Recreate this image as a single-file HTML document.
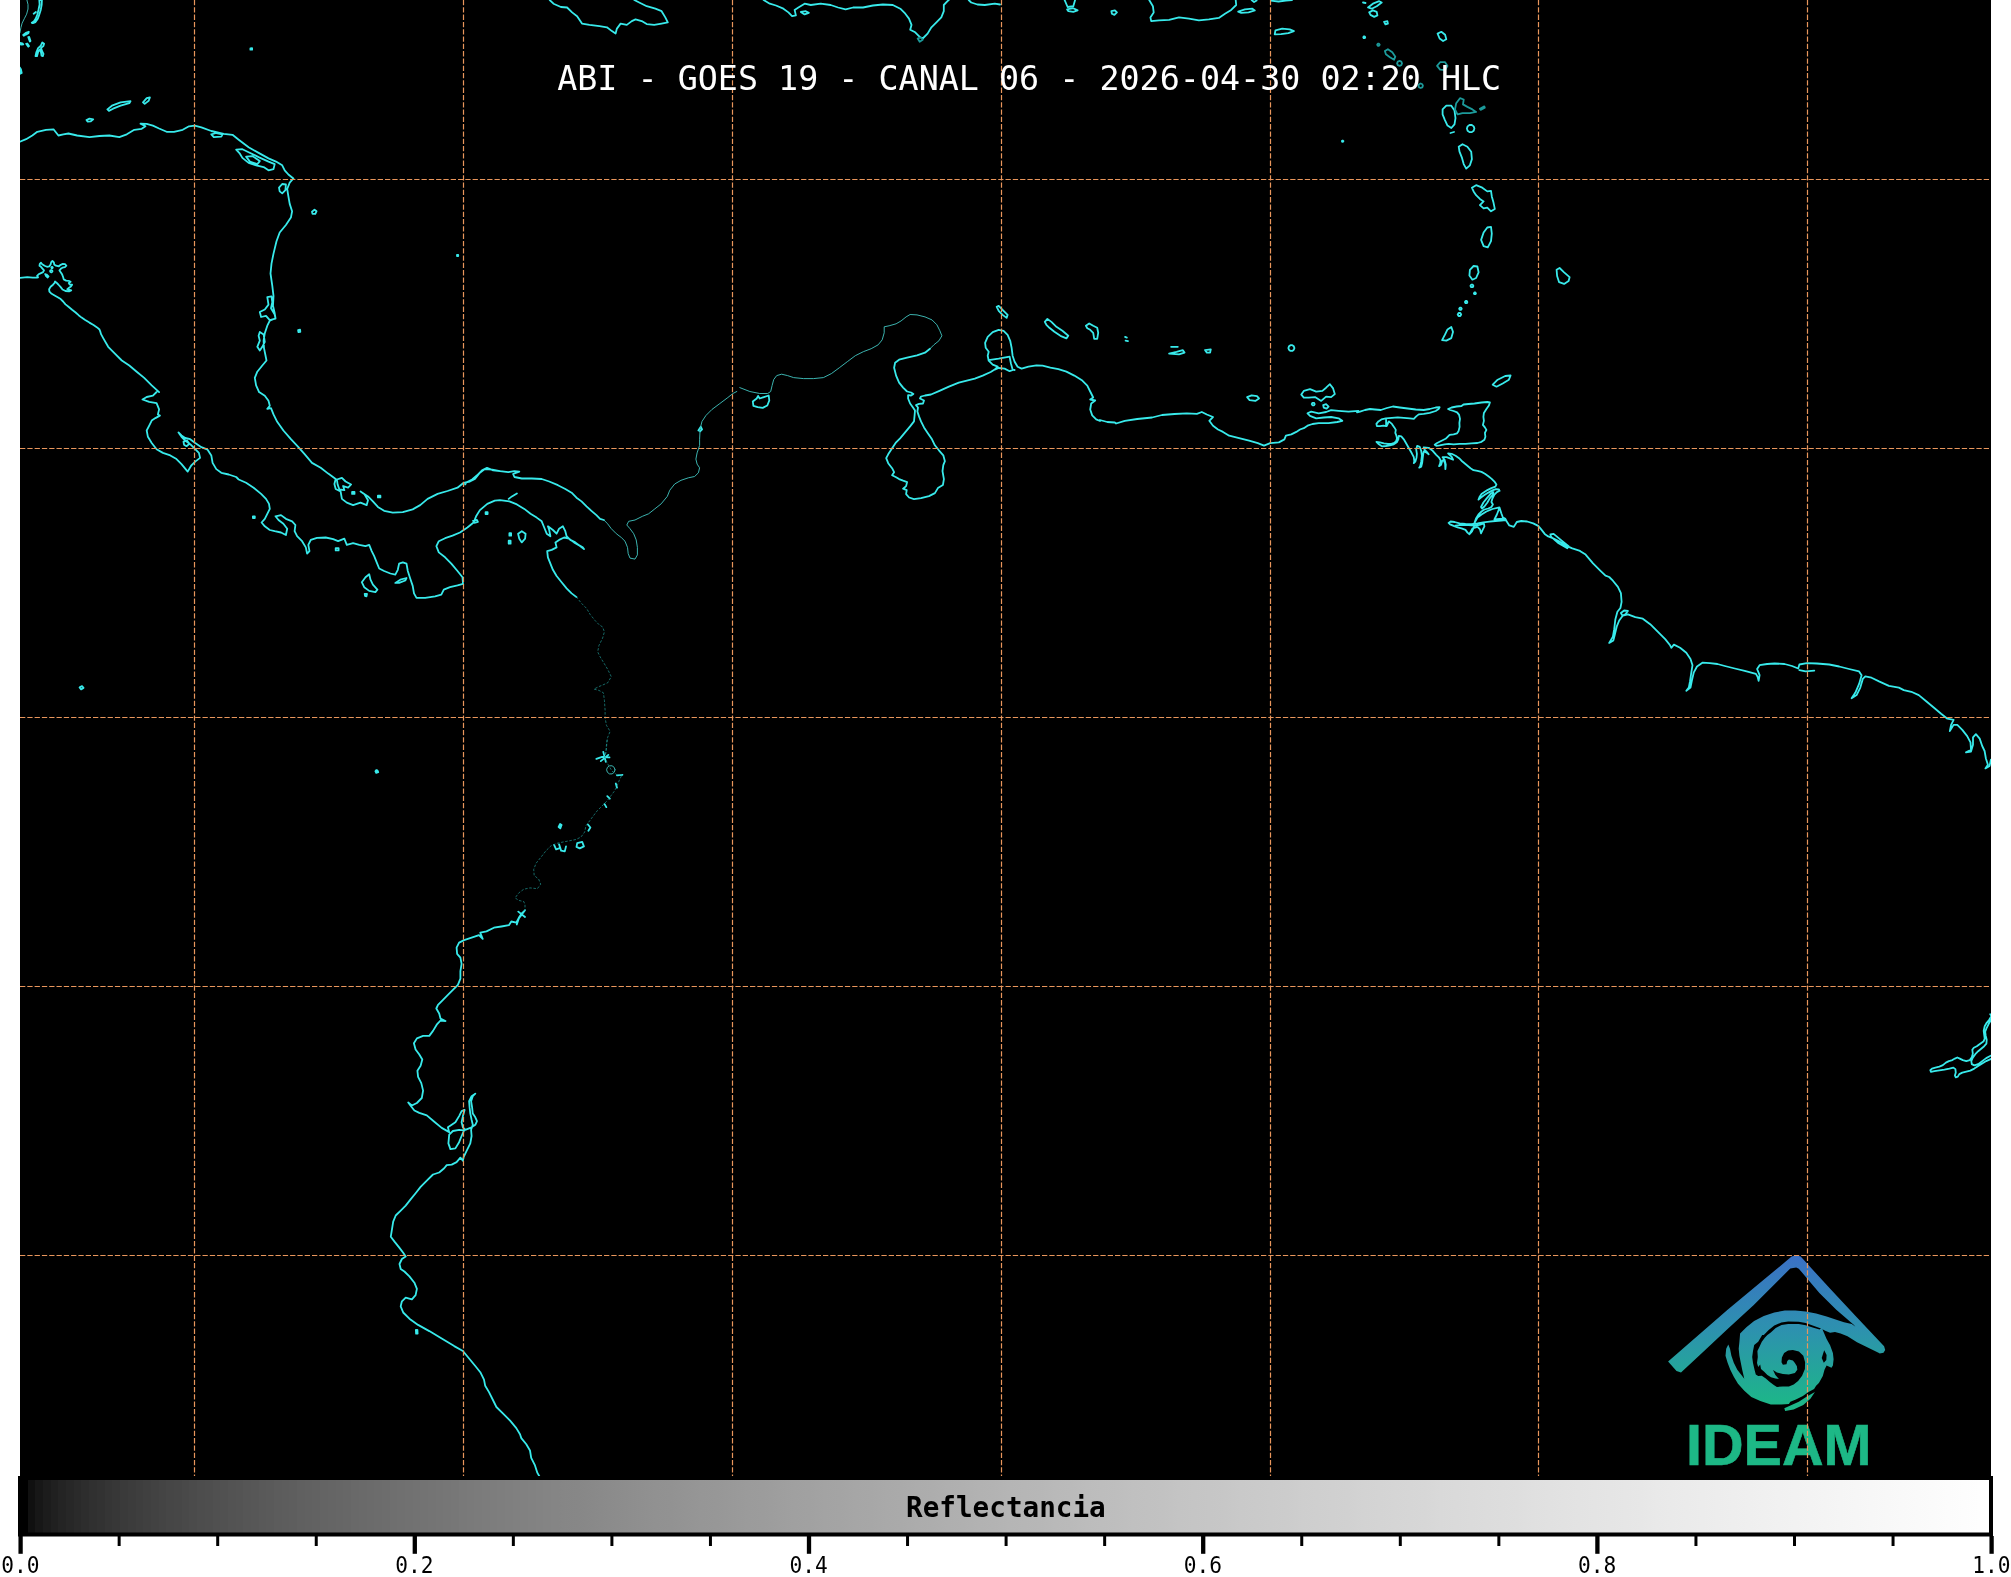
<!DOCTYPE html>
<html lang="es"><head><meta charset="utf-8"><title>ABI - GOES 19 - CANAL 06</title>
<style>
html,body{margin:0;padding:0;background:#fff;}
body{width:2011px;height:1577px;overflow:hidden;position:relative;}
svg{position:absolute;left:0;top:0;display:block;}
.t{font-family:"DejaVu Sans Mono","Liberation Mono",monospace;}
text{will-change:transform;filter:grayscale(0);}
.l{font-family:"Liberation Sans",Arial,sans-serif;font-weight:700;}
</style></head><body>
<svg width="2011" height="1577" viewBox="0 0 2011 1577">
<defs>
<linearGradient id="cb" x1="0" y1="0" x2="1" y2="0">
<stop offset="0.0000" stop-color="#000000"/><stop offset="0.0039" stop-color="#000000"/>
<stop offset="0.0039" stop-color="#101010"/><stop offset="0.0078" stop-color="#101010"/>
<stop offset="0.0078" stop-color="#171717"/><stop offset="0.0117" stop-color="#171717"/>
<stop offset="0.0117" stop-color="#1c1c1c"/><stop offset="0.0156" stop-color="#1c1c1c"/>
<stop offset="0.0156" stop-color="#202020"/><stop offset="0.0195" stop-color="#202020"/>
<stop offset="0.0195" stop-color="#242424"/><stop offset="0.0234" stop-color="#242424"/>
<stop offset="0.0234" stop-color="#272727"/><stop offset="0.0273" stop-color="#272727"/>
<stop offset="0.0273" stop-color="#2a2a2a"/><stop offset="0.0312" stop-color="#2a2a2a"/>
<stop offset="0.0312" stop-color="#2d2d2d"/><stop offset="0.0352" stop-color="#2d2d2d"/>
<stop offset="0.0352" stop-color="#303030"/><stop offset="0.0391" stop-color="#303030"/>
<stop offset="0.0391" stop-color="#323232"/><stop offset="0.0430" stop-color="#323232"/>
<stop offset="0.0430" stop-color="#353535"/><stop offset="0.0469" stop-color="#353535"/>
<stop offset="0.0469" stop-color="#373737"/><stop offset="0.0508" stop-color="#373737"/>
<stop offset="0.0508" stop-color="#3a3a3a"/><stop offset="0.0547" stop-color="#3a3a3a"/>
<stop offset="0.0547" stop-color="#3c3c3c"/><stop offset="0.0586" stop-color="#3c3c3c"/>
<stop offset="0.0586" stop-color="#3e3e3e"/><stop offset="0.0625" stop-color="#3e3e3e"/>
<stop offset="0.0625" stop-color="#404040"/><stop offset="0.0664" stop-color="#404040"/>
<stop offset="0.0664" stop-color="#424242"/><stop offset="0.0703" stop-color="#424242"/>
<stop offset="0.0703" stop-color="#444444"/><stop offset="0.0742" stop-color="#444444"/>
<stop offset="0.0742" stop-color="#464646"/><stop offset="0.0781" stop-color="#464646"/>
<stop offset="0.0781" stop-color="#474747"/><stop offset="0.0820" stop-color="#474747"/>
<stop offset="0.0820" stop-color="#494949"/><stop offset="0.0859" stop-color="#494949"/>
<stop offset="0.0859" stop-color="#4b4b4b"/><stop offset="0.0898" stop-color="#4b4b4b"/>
<stop offset="0.0898" stop-color="#4d4d4d"/><stop offset="0.0938" stop-color="#4d4d4d"/>
<stop offset="0.0938" stop-color="#4e4e4e"/><stop offset="0.0977" stop-color="#4e4e4e"/>
<stop offset="0.0977" stop-color="#505050"/><stop offset="0.1016" stop-color="#505050"/>
<stop offset="0.1016" stop-color="#515151"/><stop offset="0.1055" stop-color="#515151"/>
<stop offset="0.1055" stop-color="#535353"/><stop offset="0.1094" stop-color="#535353"/>
<stop offset="0.1094" stop-color="#545454"/><stop offset="0.1133" stop-color="#545454"/>
<stop offset="0.1133" stop-color="#565656"/><stop offset="0.1172" stop-color="#565656"/>
<stop offset="0.1172" stop-color="#575757"/><stop offset="0.1211" stop-color="#575757"/>
<stop offset="0.1211" stop-color="#595959"/><stop offset="0.1250" stop-color="#595959"/>
<stop offset="0.1250" stop-color="#5a5a5a"/><stop offset="0.1289" stop-color="#5a5a5a"/>
<stop offset="0.1289" stop-color="#5c5c5c"/><stop offset="0.1328" stop-color="#5c5c5c"/>
<stop offset="0.1328" stop-color="#5d5d5d"/><stop offset="0.1367" stop-color="#5d5d5d"/>
<stop offset="0.1367" stop-color="#5e5e5e"/><stop offset="0.1406" stop-color="#5e5e5e"/>
<stop offset="0.1406" stop-color="#606060"/><stop offset="0.1445" stop-color="#606060"/>
<stop offset="0.1445" stop-color="#616161"/><stop offset="0.1484" stop-color="#616161"/>
<stop offset="0.1484" stop-color="#626262"/><stop offset="0.1523" stop-color="#626262"/>
<stop offset="0.1523" stop-color="#646464"/><stop offset="0.1562" stop-color="#646464"/>
<stop offset="0.1562" stop-color="#656565"/><stop offset="0.1602" stop-color="#656565"/>
<stop offset="0.1602" stop-color="#666666"/><stop offset="0.1641" stop-color="#666666"/>
<stop offset="0.1641" stop-color="#676767"/><stop offset="0.1680" stop-color="#676767"/>
<stop offset="0.1680" stop-color="#696969"/><stop offset="0.1719" stop-color="#696969"/>
<stop offset="0.1719" stop-color="#6a6a6a"/><stop offset="0.1758" stop-color="#6a6a6a"/>
<stop offset="0.1758" stop-color="#6b6b6b"/><stop offset="0.1797" stop-color="#6b6b6b"/>
<stop offset="0.1797" stop-color="#6c6c6c"/><stop offset="0.1836" stop-color="#6c6c6c"/>
<stop offset="0.1836" stop-color="#6d6d6d"/><stop offset="0.1875" stop-color="#6d6d6d"/>
<stop offset="0.1875" stop-color="#6f6f6f"/><stop offset="0.1914" stop-color="#6f6f6f"/>
<stop offset="0.1914" stop-color="#707070"/><stop offset="0.1953" stop-color="#707070"/>
<stop offset="0.1953" stop-color="#717171"/><stop offset="0.1992" stop-color="#717171"/>
<stop offset="0.1992" stop-color="#727272"/><stop offset="0.2031" stop-color="#727272"/>
<stop offset="0.2031" stop-color="#737373"/><stop offset="0.2070" stop-color="#737373"/>
<stop offset="0.2070" stop-color="#747474"/><stop offset="0.2109" stop-color="#747474"/>
<stop offset="0.2109" stop-color="#757575"/><stop offset="0.2148" stop-color="#757575"/>
<stop offset="0.2148" stop-color="#767676"/><stop offset="0.2188" stop-color="#767676"/>
<stop offset="0.2188" stop-color="#777777"/><stop offset="0.2227" stop-color="#777777"/>
<stop offset="0.2227" stop-color="#797979"/><stop offset="0.2266" stop-color="#797979"/>
<stop offset="0.2266" stop-color="#7a7a7a"/><stop offset="0.2305" stop-color="#7a7a7a"/>
<stop offset="0.2305" stop-color="#7b7b7b"/><stop offset="0.2344" stop-color="#7b7b7b"/>
<stop offset="0.2344" stop-color="#7c7c7c"/><stop offset="0.2383" stop-color="#7c7c7c"/>
<stop offset="0.2383" stop-color="#7d7d7d"/><stop offset="0.2422" stop-color="#7d7d7d"/>
<stop offset="0.2422" stop-color="#7e7e7e"/><stop offset="0.2461" stop-color="#7e7e7e"/>
<stop offset="0.2461" stop-color="#7f7f7f"/><stop offset="0.2500" stop-color="#7f7f7f"/>
<stop offset="0.2500" stop-color="#808080"/><stop offset="0.2539" stop-color="#808080"/>
<stop offset="0.2539" stop-color="#818181"/><stop offset="0.2578" stop-color="#818181"/>
<stop offset="0.2578" stop-color="#828282"/><stop offset="0.2617" stop-color="#828282"/>
<stop offset="0.2617" stop-color="#838383"/><stop offset="0.2656" stop-color="#838383"/>
<stop offset="0.2656" stop-color="#848484"/><stop offset="0.2695" stop-color="#848484"/>
<stop offset="0.2695" stop-color="#858585"/><stop offset="0.2734" stop-color="#858585"/>
<stop offset="0.2754" stop-color="#868686"/>
<stop offset="0.2832" stop-color="#878787"/>
<stop offset="0.2910" stop-color="#898989"/>
<stop offset="0.2988" stop-color="#8b8b8b"/>
<stop offset="0.3066" stop-color="#8d8d8d"/>
<stop offset="0.3145" stop-color="#8f8f8f"/>
<stop offset="0.3223" stop-color="#919191"/>
<stop offset="0.3301" stop-color="#929292"/>
<stop offset="0.3379" stop-color="#949494"/>
<stop offset="0.3457" stop-color="#969696"/>
<stop offset="0.3535" stop-color="#979797"/>
<stop offset="0.3613" stop-color="#999999"/>
<stop offset="0.3691" stop-color="#9b9b9b"/>
<stop offset="0.3770" stop-color="#9c9c9c"/>
<stop offset="0.3848" stop-color="#9e9e9e"/>
<stop offset="0.3926" stop-color="#a0a0a0"/>
<stop offset="0.4004" stop-color="#a1a1a1"/>
<stop offset="0.4082" stop-color="#a3a3a3"/>
<stop offset="0.4160" stop-color="#a4a4a4"/>
<stop offset="0.4238" stop-color="#a6a6a6"/>
<stop offset="0.4316" stop-color="#a7a7a7"/>
<stop offset="0.4395" stop-color="#a9a9a9"/>
<stop offset="0.4473" stop-color="#aaaaaa"/>
<stop offset="0.4551" stop-color="#acacac"/>
<stop offset="0.4629" stop-color="#adadad"/>
<stop offset="0.4707" stop-color="#afafaf"/>
<stop offset="0.4785" stop-color="#b0b0b0"/>
<stop offset="0.4863" stop-color="#b2b2b2"/>
<stop offset="0.4941" stop-color="#b3b3b3"/>
<stop offset="0.5020" stop-color="#b5b5b5"/>
<stop offset="0.5098" stop-color="#b6b6b6"/>
<stop offset="0.5176" stop-color="#b7b7b7"/>
<stop offset="0.5254" stop-color="#b9b9b9"/>
<stop offset="0.5332" stop-color="#bababa"/>
<stop offset="0.5410" stop-color="#bcbcbc"/>
<stop offset="0.5488" stop-color="#bdbdbd"/>
<stop offset="0.5566" stop-color="#bebebe"/>
<stop offset="0.5645" stop-color="#c0c0c0"/>
<stop offset="0.5723" stop-color="#c1c1c1"/>
<stop offset="0.5801" stop-color="#c2c2c2"/>
<stop offset="0.5879" stop-color="#c4c4c4"/>
<stop offset="0.5957" stop-color="#c5c5c5"/>
<stop offset="0.6035" stop-color="#c6c6c6"/>
<stop offset="0.6113" stop-color="#c7c7c7"/>
<stop offset="0.6191" stop-color="#c9c9c9"/>
<stop offset="0.6270" stop-color="#cacaca"/>
<stop offset="0.6348" stop-color="#cbcbcb"/>
<stop offset="0.6426" stop-color="#cccccc"/>
<stop offset="0.6504" stop-color="#cecece"/>
<stop offset="0.6582" stop-color="#cfcfcf"/>
<stop offset="0.6660" stop-color="#d0d0d0"/>
<stop offset="0.6738" stop-color="#d1d1d1"/>
<stop offset="0.6816" stop-color="#d3d3d3"/>
<stop offset="0.6895" stop-color="#d4d4d4"/>
<stop offset="0.6973" stop-color="#d5d5d5"/>
<stop offset="0.7051" stop-color="#d6d6d6"/>
<stop offset="0.7129" stop-color="#d7d7d7"/>
<stop offset="0.7207" stop-color="#d9d9d9"/>
<stop offset="0.7285" stop-color="#dadada"/>
<stop offset="0.7363" stop-color="#dbdbdb"/>
<stop offset="0.7441" stop-color="#dcdcdc"/>
<stop offset="0.7520" stop-color="#dddddd"/>
<stop offset="0.7598" stop-color="#dedede"/>
<stop offset="0.7676" stop-color="#e0e0e0"/>
<stop offset="0.7754" stop-color="#e1e1e1"/>
<stop offset="0.7832" stop-color="#e2e2e2"/>
<stop offset="0.7910" stop-color="#e3e3e3"/>
<stop offset="0.7988" stop-color="#e4e4e4"/>
<stop offset="0.8066" stop-color="#e5e5e5"/>
<stop offset="0.8145" stop-color="#e6e6e6"/>
<stop offset="0.8223" stop-color="#e7e7e7"/>
<stop offset="0.8301" stop-color="#e9e9e9"/>
<stop offset="0.8379" stop-color="#eaeaea"/>
<stop offset="0.8457" stop-color="#ebebeb"/>
<stop offset="0.8535" stop-color="#ececec"/>
<stop offset="0.8613" stop-color="#ededed"/>
<stop offset="0.8691" stop-color="#eeeeee"/>
<stop offset="0.8770" stop-color="#efefef"/>
<stop offset="0.8848" stop-color="#f0f0f0"/>
<stop offset="0.8926" stop-color="#f1f1f1"/>
<stop offset="0.9004" stop-color="#f2f2f2"/>
<stop offset="0.9082" stop-color="#f3f3f3"/>
<stop offset="0.9160" stop-color="#f4f4f4"/>
<stop offset="0.9238" stop-color="#f5f5f5"/>
<stop offset="0.9316" stop-color="#f6f6f6"/>
<stop offset="0.9395" stop-color="#f7f7f7"/>
<stop offset="0.9473" stop-color="#f8f8f8"/>
<stop offset="0.9551" stop-color="#f9f9f9"/>
<stop offset="0.9629" stop-color="#fafafa"/>
<stop offset="0.9707" stop-color="#fbfbfb"/>
<stop offset="0.9785" stop-color="#fcfcfc"/>
<stop offset="0.9863" stop-color="#fdfdfd"/>
<stop offset="0.9941" stop-color="#fefefe"/>
<stop offset="0.9980" stop-color="#ffffff"/>
</linearGradient>
<linearGradient id="lg" gradientUnits="userSpaceOnUse" x1="0" y1="1255" x2="0" y2="1440">
<stop offset="0" stop-color="rgb(59,112,197)"/><stop offset="0.4" stop-color="rgb(45,145,175)"/><stop offset="0.8" stop-color="rgb(29,182,137)"/><stop offset="1" stop-color="rgb(29,185,133)"/>
</linearGradient>
<clipPath id="mapclip"><rect x="20" y="0" width="1971" height="1476"/></clipPath>
</defs>
<rect x="0" y="0" width="2011" height="1577" fill="#fff"/>
<rect x="20" y="0" width="1971" height="1476" fill="#000"/>
<g id="coast" clip-path="url(#mapclip)" fill="none" stroke="#38eaeb" stroke-width="1.8" stroke-linejoin="round" stroke-linecap="round">
<path d="M19.9 141.7 L26.1 139.2 L32.3 135.5 L37.3 131.8 L46.0 129.8 L53.5 129.3 L58.4 135.5 L63.4 134.3 L68.4 133.5 L77.1 135.5 L89.5 137.2 L99.5 136.0 L109.4 135.5 L119.3 137.2 L126.8 134.3 L134.3 129.8 L141.7 128.8 L145.5 126.3 L140.5 123.6 L146.7 123.8 L152.9 125.6 L159.1 128.5 L166.6 131.8 L174.0 131.8 L182.7 129.8 L189.0 126.3 L194.7 125.6 L201.4 127.3 L211.3 131.0 L223.8 133.8 L232.5 134.8 L238.7 139.7 L248.6 147.2 L258.6 152.9 L268.5 158.4 L276.0 161.6 L282.2 165.3 L284.7 170.3 L288.4 174.5 L293.4 178.5 L289.7 182.7 L287.2 189.0 L288.4 196.4 L289.7 203.9 L292.1 211.3 L290.9 217.6 L285.9 225.0 L279.7 232.5 L276.5 241.2 L273.5 253.6 L271.5 263.6 L270.5 273.5 L272.3 285.9 L273.5 295.9 L273.0 305.8 L274.7 313.3 L275.5 318.2 L269.8 320.7 L267.3 325.7 L264.8 333.2 L263.6 340.6 L264.0 348.1 L265.5 355.5 L266.5 360.5 L262.3 365.5 L257.3 371.7 L254.8 377.9 L256.1 385.4 L259.1 392.1 M211.3 134.3 L216.3 133.0 L222.5 134.3 L221.3 136.7 L213.8 137.2Z M236.2 149.7 L242.4 149.2 L248.6 152.2 L258.6 157.1 L268.5 161.6 L274.7 164.1 L273.5 169.1 L268.5 170.3 L263.6 167.1 L256.1 165.3 L248.6 162.9 L242.4 157.9 L239.9 153.7Z M246.1 156.6 L252.4 156.1 L259.8 161.1 L257.3 164.1 L249.9 161.6Z M279.0 187.7 L282.2 184.0 L285.9 184.5 L285.4 190.2 L282.2 193.4 L279.7 191.4Z M267.3 297.1 L271.5 296.4 L272.3 302.1 L271.0 308.3 L274.7 314.5 L275.5 318.7 L269.8 320.2 L266.0 315.8 L261.1 317.0 L259.8 312.0 L264.8 309.5 L268.5 304.6Z M259.8 331.9 L263.6 334.4 L264.8 341.9 L262.3 346.8 L259.8 350.6 L257.3 346.8 L259.8 340.6 L258.6 335.7Z M107.4 109.4 L111.9 105.7 L120.6 102.4 L130.5 101.2 L129.3 103.2 L120.6 105.7 L113.1 108.7 L108.9 110.9Z M143.0 102.4 L146.7 98.2 L149.9 97.5 L148.7 100.7 L144.7 103.9Z M86.5 120.1 L89.5 118.6 L93.2 119.3 L90.8 121.3 L87.5 121.6Z M250.4 48.5 L252.1 48.2 L252.1 49.7 L250.4 49.7Z M312.0 211.8 L314.5 209.6 L316.5 211.3 L315.3 213.8 L312.5 213.8Z M298.1 330.2 L300.1 329.7 L300.3 331.9 L298.4 332.2Z M457.0 254.8 L458.2 254.8 L458.2 256.1 L457.0 256.1Z M100.9 333.9 L103.2 338.1 L108.2 346.8 L114.4 353.1 L121.8 360.5 L129.3 365.5 L136.7 371.7 L144.2 377.9 L151.7 385.4 L159.1 392.1 M259.1 392.0 L264.8 395.7 L268.5 400.7 L269.8 405.7 L267.3 408.9 L271.0 408.2 L273.5 414.4 L277.2 421.8 L283.4 430.5 L290.9 439.2 L298.4 447.2 L304.6 454.2 L312.0 462.9 L320.7 467.8 L328.2 473.6 L335.7 479.0 L334.4 484.0 L335.7 489.0 L340.6 491.5 L341.9 498.9 L346.8 502.6 L353.1 505.1 L360.5 502.6 L366.7 505.1 L368.0 500.2 L364.2 493.9 L360.5 491.5 L368.0 496.4 L372.9 501.4 L377.9 506.9 L384.1 510.8 L392.8 512.6 L402.8 512.1 L412.7 509.4 L420.2 505.1 L427.6 498.9 L437.6 493.9 L447.5 491.0 L457.5 487.7 L463.7 482.8 L469.9 481.5 L474.9 479.0 L479.9 472.8 L484.8 469.1 L492.3 469.6 L500.0 471.1 M336.9 479.5 L341.9 477.8 L345.6 481.5 L351.1 484.5 L348.1 487.7 L343.1 486.0 L344.4 490.2 L339.4 489.5 L337.6 484.5Z M352.1 492.0 L354.5 492.0 L354.5 493.9 L352.1 493.9Z M377.9 495.7 L380.4 495.7 L380.4 497.4 L377.9 497.4Z M156.6 392.0 L152.9 395.7 L146.7 397.0 L142.5 399.5 L149.2 401.9 L156.6 403.2 L159.1 409.4 L157.9 414.4 L159.9 415.6 L155.4 418.1 L151.7 420.6 L149.2 425.6 L146.7 430.5 L147.9 436.8 L151.7 443.0 L156.6 449.2 L162.9 452.9 L170.3 455.4 L176.5 459.1 L181.5 464.1 L187.7 471.6 L191.4 465.3 L195.2 461.6 L200.1 457.9 L198.9 452.9 L195.2 449.2 L190.2 444.2 L185.2 440.5 L181.5 436.8 L178.5 432.5 L181.5 435.5 L185.2 438.0 L190.2 439.2 L195.2 443.0 L201.4 447.2 L207.6 449.7 L211.3 455.4 L212.6 462.9 L216.3 469.1 L221.3 472.8 L228.7 474.5 L236.2 477.0 L238.7 479.5 L246.1 482.8 L253.6 487.7 L261.1 493.9 L266.0 498.9 L269.0 503.9 L269.8 508.9 L267.3 513.8 L264.8 518.8 L261.6 522.5 L264.8 526.3 L269.8 530.0 L274.7 531.2 L281.0 532.5 L285.9 535.0 L287.2 528.7 L283.4 523.8 L278.5 520.0 L275.5 516.3 L281.0 515.1 L285.9 518.8 L292.1 521.3 L295.4 525.0 L294.6 531.2 L297.1 536.2 L302.1 541.2 L305.8 547.4 L307.1 553.6 L309.5 551.1 L308.3 544.9 L310.8 539.9 L317.0 537.9 L325.7 537.5 L333.2 539.2 L338.1 541.2 L344.4 538.7 L346.8 544.9 L353.1 543.2 L359.3 544.9 L365.5 546.2 L369.2 544.9 L371.7 551.1 L374.2 556.1 L376.7 562.3 L379.2 568.5 L384.1 571.0 L390.4 573.5 L395.3 574.7 L397.8 569.8 L399.1 563.6 L402.8 562.3 L406.5 563.6 L407.8 571.0 L410.2 578.5 L412.7 585.9 L414.0 593.4 L416.5 597.9 L425.2 597.9 L435.1 596.4 L441.3 594.6 L443.8 589.7 L450.0 587.2 L457.5 585.4 L463.0 583.9 L462.5 577.2 L457.5 571.0 L451.3 563.6 L445.1 557.3 L438.8 552.4 L436.4 546.2 L438.8 541.2 L445.1 538.2 L452.5 535.7 L460.0 532.5 L467.4 527.5 L473.6 522.5 L476.1 516.3 L479.9 510.1 L487.3 503.9 L494.8 500.7 L500.0 500.2 M183.5 441.7 L187.0 440.5 L189.5 443.7 L186.5 446.2 L184.0 444.7Z M361.8 582.2 L365.5 577.2 L369.2 574.2 L370.5 579.7 L372.9 584.7 L377.4 589.7 L375.4 592.1 L369.2 590.9 L364.2 587.2Z M364.7 593.9 L367.0 593.9 L366.5 596.4 L365.0 595.9Z M395.3 582.9 L400.3 579.7 L406.5 578.0 L405.3 580.5 L399.1 582.9Z M252.9 516.3 L254.8 516.3 L254.8 518.1 L252.9 518.1Z M335.7 548.1 L338.6 548.1 L338.6 550.4 L335.7 550.4Z M485.6 512.1 L487.6 512.1 L487.6 514.1 L485.6 514.1Z M473.1 520.8 L476.9 519.8 L477.9 521.8 L474.4 522.8Z M79.6 687.4 L82.0 686.1 L83.5 687.9 L81.1 689.4Z M375.4 771.2 L377.4 770.4 L378.2 772.2 L376.2 772.9Z M500.0 471.1 L493.2 470.3 L487.0 467.8 L482.0 470.3 L477.1 475.3 L472.1 479.5 L467.1 482.0 L465.1 484.5 M500.0 471.1 L508.2 472.1 L514.4 471.1 L519.3 471.6 L513.1 474.0 L514.4 477.0 L521.8 478.5 L531.8 478.5 L541.7 479.0 L549.2 481.5 L557.9 485.2 L565.3 489.0 L571.6 492.7 L576.5 497.7 L581.5 501.4 L586.5 506.4 L591.4 510.8 L596.4 515.1 L600.1 518.8 L603.9 520.0 M500.0 500.2 L509.4 501.4 L516.9 504.4 L524.3 508.9 L530.5 513.8 L536.7 517.6 L541.7 521.3 L544.2 527.5 L546.7 533.7 L550.4 536.2 L549.2 530.0 L547.9 526.3 L552.9 530.0 L556.6 533.7 L559.1 528.7 L562.9 526.3 L565.3 531.2 L566.6 536.2 L570.3 539.9 L575.3 542.4 L580.3 546.2 L584.0 549.1 L582.7 547.4 L574.0 542.4 L569.1 538.7 L564.1 537.5 L559.1 539.9 L555.4 542.4 L556.6 547.4 L551.7 549.9 L547.2 551.1 L547.9 557.3 L550.4 563.6 L552.9 569.8 L556.6 576.0 L561.6 582.2 L566.6 588.4 L571.6 593.4 L576.5 597.1 M508.7 498.9 L511.9 496.4 L516.9 493.4 M518.1 533.7 L521.8 531.2 L525.6 533.7 L525.1 538.7 L521.8 542.4 L519.3 538.7Z M509.4 533.2 L511.1 533.2 L511.1 535.7 L509.4 535.7Z M508.7 540.7 L510.6 540.7 L510.6 543.7 L508.7 543.7Z M485.8 512.1 L487.5 512.1 L487.5 513.8 L485.8 513.8Z M698.4 430.5 L700.8 426.8 L702.1 429.3 L700.1 431.3 M549.7 0.0 L553.5 3.7 L560.9 7.0 L567.1 7.5 L572.1 12.4 L577.1 16.2 L582.0 23.6 L589.5 24.9 L599.5 26.1 L606.9 27.3 L611.9 31.1 L615.6 33.6 L616.9 28.6 L620.6 23.6 L626.8 24.9 L631.8 21.1 L635.5 19.4 L641.7 21.1 L646.7 24.1 L654.2 24.9 L661.6 23.6 L667.8 22.4 L665.3 17.4 L661.6 11.2 L655.4 8.7 L646.7 6.2 L639.2 2.5 L634.3 0.0 M763.6 0.0 L769.8 3.7 L776.0 5.5 L783.4 8.7 L788.4 12.4 L792.1 16.2 L795.9 15.4 L794.6 9.9 L798.4 7.5 L804.6 3.7 L810.8 5.0 L820.7 3.7 L830.7 5.0 L838.1 7.5 L845.6 9.4 L853.1 7.5 L863.0 7.5 L872.9 5.5 L882.9 4.5 L892.8 5.0 L900.3 8.7 L905.3 13.7 L909.0 18.6 L911.5 24.9 L910.2 29.8 L915.2 32.3 L920.2 37.3 L922.7 38.5 L927.6 33.6 L931.4 27.3 L936.4 22.4 L941.3 17.4 L943.8 11.2 L943.8 5.0 L947.5 1.2 L948.8 0.0 M800.8 11.9 L805.8 11.2 L808.8 12.9 L804.6 14.4Z M968.7 0.0 L971.2 2.5 L977.4 4.5 L984.8 5.0 L994.8 3.7 L1000.0 4.5 M752.8 401.5 L756.7 398.5 L758.1 395.9 L759.7 398.5 L768.7 395.5 L769.3 400.5 L767.3 405.5 L762.7 407.9 L757.7 407.1 L753.4 405.9Z M930.0 348.7 L925.0 352.7 L917.0 355.3 L907.1 357.7 L899.1 359.7 L895.1 362.7 L894.1 367.7 L896.1 375.6 L899.1 382.6 L903.1 387.6 L907.1 391.5 L911.1 392.5 L913.4 393.9 L911.1 395.5 L908.1 395.1 L908.1 398.5 L910.1 403.5 L913.0 407.5 L915.0 410.5 L914.6 415.4 L914.0 421.4 L910.1 426.4 L905.1 432.4 L900.1 438.3 L896.1 442.3 L892.1 448.3 L888.2 454.3 L886.2 458.2 L888.2 463.2 L892.1 468.2 L894.1 472.2 L892.1 475.2 L896.1 477.2 L899.1 479.1 L903.1 480.7 L907.1 482.1 L906.1 486.1 L903.1 488.7 L906.7 490.1 L906.1 494.1 L909.1 497.5 L914.0 499.1 L921.0 498.1 L929.0 496.1 L934.9 493.1 L937.9 488.1 L942.9 485.1 L943.9 479.1 L942.5 471.2 L943.3 465.2 L944.9 461.2 L943.3 455.3 L938.9 450.3 L934.9 445.3 L932.0 439.3 L928.0 433.4 L924.0 427.4 L921.0 421.4 L919.0 416.4 L917.4 411.5 L918.0 407.5 L916.0 405.1 L919.0 403.9 L923.0 403.5 L924.0 400.5 L920.0 398.5 L921.0 396.5 L925.0 395.5 L931.0 394.5 L938.9 391.1 L948.9 386.6 L958.8 382.6 L966.8 380.6 L974.8 378.6 L982.7 375.6 L990.7 372.0 L994.7 369.6 L997.7 366.7 L992.7 364.7 L988.7 360.7 L987.7 355.7 L988.7 351.7 L985.7 347.7 L985.1 342.8 L987.7 336.8 L992.7 332.2 L998.7 329.8 L1003.6 330.8 L1007.6 334.8 L1010.2 340.8 L1011.6 347.7 L1012.6 355.7 L1014.6 361.7 L1017.6 366.7 L1021.6 368.6 L1028.5 366.7 L1036.5 365.3 L1042.5 365.7 L1050.4 367.7 L1058.4 369.2 L1066.4 371.6 L1074.3 375.6 L1082.3 380.6 L1087.3 385.6 L1090.2 391.5 L1093.2 397.5 L1090.2 399.5 L1095.2 400.5 L1091.2 403.5 L1090.2 409.5 L1092.2 415.4 L1096.2 419.4 L1100.0 421.0 M988.7 360.1 L998.7 358.7 L1009.6 356.7 L1011.0 363.7 L1012.6 369.6 L1014.6 370.0 M994.7 369.6 L998.7 368.0 L1004.6 368.6 L1009.6 371.2 L1013.0 370.0 M996.7 306.9 L998.7 305.9 L1002.6 309.9 L1007.6 314.9 L1006.6 317.9 L1002.6 314.9 L998.7 310.9Z M1044.8 321.9 L1047.4 318.9 L1051.4 321.9 L1056.4 326.8 L1062.4 330.8 L1068.3 335.8 L1066.4 338.4 L1060.4 335.8 L1054.4 331.8 L1049.4 327.8 L1046.4 324.8Z M1085.9 325.8 L1089.2 323.4 L1093.2 325.8 L1097.2 327.8 L1098.2 332.8 L1097.2 338.8 L1094.2 338.8 L1093.2 332.8 L1090.2 329.8 L1087.3 328.2Z M1149.2 0.0 L1152.9 6.2 L1153.7 12.4 L1150.4 17.4 L1151.2 21.1 L1159.1 20.4 L1169.1 19.9 L1179.0 17.4 L1189.0 18.6 L1198.9 20.4 L1208.9 19.4 L1218.8 17.9 L1225.0 13.7 L1231.2 9.9 L1236.2 5.0 L1235.7 0.0 M1111.4 11.2 L1114.9 10.4 L1116.9 12.4 L1114.4 14.9 L1111.9 13.7Z M1064.6 0.0 L1067.6 7.0 L1073.3 6.2 L1075.1 0.0 M1067.1 9.4 L1073.3 8.2 L1077.6 10.4 L1073.3 11.9 L1068.4 11.2Z M1238.2 11.7 L1244.9 9.4 L1252.4 8.7 L1254.8 10.4 L1248.6 12.4 L1241.2 12.9Z M1251.6 0.0 L1254.1 2.0 L1256.6 0.5 M1274.7 34.3 L1275.5 30.3 L1282.2 28.6 L1289.7 29.3 L1293.9 31.1 L1288.4 33.1 L1281.0 34.1Z M1271.0 0.7 L1278.5 1.5 L1285.9 0.5 L1292.1 0.0 M1368.0 7.5 L1372.9 3.7 L1379.2 1.2 L1381.7 2.5 L1376.7 6.2 L1371.7 8.7Z M1369.2 12.4 L1372.9 10.4 L1376.7 11.9 L1377.4 15.4 L1374.2 16.9 L1370.5 14.9Z M1363.0 2.5 L1365.5 3.0 M1384.1 21.9 L1387.4 21.1 L1387.9 23.6 L1385.4 24.4Z M1365.2 37.3 L1364.7 38.2 L1363.7 38.2 L1363.3 37.3 L1363.7 36.4 L1364.7 36.4Z M1437.6 33.6 L1441.3 31.8 L1445.1 34.8 L1446.3 39.3 L1443.1 41.0 L1439.6 38.5Z M1442.6 109.4 L1446.3 105.7 L1451.3 105.7 L1454.5 110.6 L1455.5 118.1 L1454.5 124.3 L1451.3 128.0 L1447.5 125.6 L1444.6 119.3 L1442.6 114.4Z M1474.4 128.5 L1473.7 130.7 L1471.8 132.1 L1469.5 132.1 L1467.6 130.7 L1466.9 128.5 L1467.6 126.4 L1469.5 125.0 L1471.8 125.0 L1473.7 126.4Z M1450.5 133.0 L1454.0 132.0 M1458.7 146.7 L1462.5 144.2 L1467.4 146.7 L1471.2 151.7 L1471.9 159.1 L1469.9 165.3 L1466.2 168.6 L1463.7 164.1 L1462.0 157.9 L1459.5 151.7Z M1471.9 187.7 L1476.1 185.2 L1482.3 187.7 L1487.3 191.4 L1491.0 190.9 L1491.8 196.4 L1493.5 202.6 L1494.8 208.9 L1491.0 211.3 L1487.3 207.6 L1483.6 208.4 L1479.9 205.1 L1483.6 201.4 L1479.9 198.9 L1476.1 195.2 L1473.6 191.4Z M1483.6 232.5 L1487.3 227.5 L1491.0 226.8 L1491.8 233.7 L1491.0 241.2 L1487.8 247.4 L1483.6 246.1 L1481.1 239.9Z M1469.9 269.8 L1473.6 266.0 L1477.4 266.5 L1478.6 272.3 L1476.1 278.0 L1472.4 279.7 L1469.4 275.5Z M1473.4 285.9 L1472.7 287.2 L1471.2 287.2 L1470.4 285.9 L1471.2 284.6 L1472.7 284.6Z M1475.9 293.4 L1475.4 294.2 L1474.4 294.2 L1473.9 293.4 L1474.4 292.5 L1475.4 292.5Z M1467.4 302.1 L1466.8 303.2 L1465.6 303.2 L1464.9 302.1 L1465.6 301.0 L1466.8 301.0Z M1461.7 308.8 L1461.1 309.9 L1459.8 309.9 L1459.2 308.8 L1459.8 307.7 L1461.1 307.7Z M1461.2 314.5 L1460.3 316.0 L1458.6 316.0 L1457.7 314.5 L1458.6 313.0 L1460.3 313.0Z M1447.5 329.4 L1451.3 327.0 L1453.0 331.9 L1451.3 338.1 L1446.3 340.6 L1442.1 340.1 L1445.1 334.4Z M1343.4 141.2 L1342.8 141.9 L1342.0 141.7 L1342.0 140.8 L1342.8 140.5Z M1125.1 336.9 L1126.8 337.6 M1125.6 340.6 L1128.0 341.1 M1171.1 346.8 L1177.8 346.8 M1169.1 353.6 L1176.5 351.8 L1182.7 350.1 L1184.5 352.6 L1179.0 354.3Z M1205.1 350.1 L1210.8 349.3 L1210.1 352.6 L1206.9 352.6Z M1294.4 348.1 L1293.8 349.8 L1292.3 350.9 L1290.5 350.9 L1289.0 349.8 L1288.4 348.1 L1289.0 346.3 L1290.5 345.2 L1292.3 345.2 L1293.8 346.3Z M1099.9 420.0 L1107.3 422.0 L1114.8 422.5 L1116.1 423.5 L1124.8 420.8 L1137.2 419.0 L1152.1 417.5 L1162.0 415.0 L1174.5 414.0 L1186.9 413.3 L1196.9 413.8 L1201.8 412.0 L1206.8 414.5 L1213.0 417.0 L1209.3 420.8 L1213.0 425.7 L1218.0 429.5 L1223.0 431.9 L1229.2 435.7 L1239.1 438.2 L1249.1 440.6 L1257.8 443.1 L1264.0 445.6 L1270.2 443.1 L1278.9 442.4 L1284.4 439.4 L1285.9 435.7 L1291.3 434.4 L1296.3 431.9 L1300.0 429.5 L1303.8 428.2 L1307.5 425.7 L1312.5 424.0 L1318.7 423.2 L1328.6 423.2 L1337.3 422.0 L1342.3 420.8 L1338.6 418.3 L1331.1 417.0 L1323.7 417.5 L1316.2 418.3 L1310.0 415.8 L1307.5 413.3 L1311.2 411.6 L1318.7 413.3 L1326.1 412.0 L1331.1 410.1 L1338.6 410.8 L1348.5 411.6 L1358.5 410.8 M1559.9 541.8 L1564.8 545.1 L1572.3 548.3 L1580.0 550.8 M1550.4 534.4 L1553.6 533.9 L1561.1 540.1 L1568.6 546.3 L1567.3 548.3 L1558.6 543.3 L1551.2 536.9Z M1492.7 384.7 L1497.7 379.7 L1505.2 376.0 L1510.6 375.5 L1508.9 379.7 L1502.7 383.5 L1496.5 386.7Z M1301.3 394.6 L1303.8 390.9 L1310.0 389.2 L1316.2 391.7 L1322.4 390.9 L1326.1 387.7 L1329.9 384.2 L1333.1 388.4 L1334.8 394.1 L1331.1 397.1 L1326.1 396.6 L1321.2 400.9 L1315.0 397.1 L1308.7 397.6 L1303.8 397.6Z M1314.7 404.1 L1314.0 405.4 L1312.5 405.4 L1311.7 404.1 L1312.5 402.8 L1314.0 402.8Z M1323.2 405.1 L1326.1 404.1 L1328.6 406.6 L1326.6 408.6 L1323.7 407.6Z M1247.1 397.1 L1251.6 395.4 L1257.0 396.1 L1259.0 398.4 L1255.3 400.9 L1249.6 400.1Z M1579.9 550.9 L1585.6 554.6 L1593.0 563.3 L1600.5 570.8 L1605.5 575.7 L1609.2 577.0 L1612.9 580.7 L1617.9 586.9 L1620.9 593.1 L1621.6 601.8 L1620.4 608.0 L1617.4 611.8 L1615.4 619.2 L1614.2 629.2 L1612.9 636.6 L1609.2 642.9 L1613.4 640.4 L1614.9 634.2 L1616.7 626.7 L1619.2 620.5 L1622.9 615.5 L1627.9 614.3 L1635.3 617.2 L1642.8 618.7 L1650.2 624.2 L1657.7 631.7 L1665.2 639.1 L1670.1 645.3 L1671.4 647.8 L1673.9 644.6 L1680.1 647.8 L1686.3 652.8 L1690.5 659.0 L1692.5 665.2 L1691.3 672.7 L1690.0 681.4 L1688.8 687.6 L1686.3 690.8 L1690.5 687.6 L1692.0 680.1 L1693.7 672.7 L1697.0 666.5 L1702.4 662.7 L1709.9 663.2 L1717.4 664.0 L1724.8 666.0 L1734.8 668.5 L1744.7 670.9 L1755.9 673.9 L1757.6 676.9 L1758.6 680.9 L1759.6 675.2 L1757.1 669.0 L1759.6 665.2 L1767.1 664.0 L1774.6 663.5 L1784.5 664.0 L1792.0 666.0 L1798.2 668.5 L1799.4 664.5 L1806.9 663.2 L1816.8 663.5 L1829.2 664.5 L1839.2 666.5 L1849.1 669.0 L1859.1 671.4 L1861.6 675.2 L1859.1 683.9 L1855.4 692.6 L1851.6 698.3 L1856.6 695.1 L1860.3 687.6 L1862.8 678.9 L1865.3 676.4 L1871.5 677.7 L1879.0 681.4 L1888.9 685.9 L1898.9 687.6 L1903.8 690.1 L1911.3 691.8 L1918.8 695.1 L1926.2 701.3 L1933.7 707.5 L1941.1 713.7 L1947.4 718.7 L1953.6 719.9 L1951.1 724.9 L1949.8 731.1 L1953.6 724.9 L1957.3 724.9 L1962.3 729.9 L1967.2 736.1 L1970.5 742.3 L1971.0 749.8 L1966.0 752.3 L1971.0 751.5 L1973.0 744.8 L1973.0 737.3 L1975.9 734.1 L1979.7 738.6 L1982.2 746.0 L1984.6 751.0 L1985.9 758.5 L1987.9 764.7 L1985.4 768.4 L1989.6 765.9 L1990.9 759.7 M1799.4 670.2 L1805.6 671.4 L1814.3 670.7 M1620.9 613.0 L1624.1 610.5 L1627.9 611.0 L1625.4 614.3 L1622.4 615.5Z M1991.2 1016.6 L1989.2 1019.8 L1986.7 1022.8 L1984.7 1026.3 L1983.7 1030.8 L1984.2 1034.8 L1984.7 1038.7 L1983.7 1041.2 L1980.2 1043.7 L1976.8 1046.2 L1973.8 1047.7 L1972.3 1049.7 L1972.8 1053.7 L1971.8 1057.2 L1969.8 1060.1 L1966.3 1061.1 L1962.8 1060.1 L1959.8 1058.6 L1957.3 1057.5 L1954.9 1058.6 L1952.4 1060.1 L1948.9 1061.1 L1945.9 1062.6 L1942.9 1065.1 L1939.4 1066.6 L1935.4 1067.6 L1932.0 1068.6 L1930.3 1070.1 L1931.0 1071.8 L1934.4 1071.1 L1939.4 1070.4 L1944.4 1069.6 L1949.4 1068.6 L1953.4 1067.6 L1955.4 1069.1 L1955.8 1072.6 L1954.9 1075.6 L1955.8 1077.4 L1957.8 1076.6 L1959.3 1074.1 L1962.3 1072.6 L1966.3 1071.6 L1970.3 1070.6 L1974.3 1068.6 L1978.2 1066.1 L1982.2 1063.6 L1986.2 1061.1 L1991.2 1058.9 M1991.2 1019.6 L1988.7 1023.8 L1986.7 1027.8 L1985.2 1031.8 L1985.7 1035.7 L1986.7 1039.7 L1986.4 1043.7 L1984.2 1046.2 L1981.2 1048.7 L1978.2 1051.2 L1975.3 1054.2 L1972.8 1057.7 L1971.3 1061.1 L1971.8 1064.1 L1974.3 1065.4 L1978.2 1064.1 L1982.2 1061.1 L1986.2 1058.1 L1991.2 1055.5 M1990.2 1014.3 L1991.2 1015.6 M1556.6 269.8 L1559.6 268.0 L1564.1 272.3 L1569.6 277.2 L1568.6 281.0 L1564.1 283.9 L1559.1 282.2 L1557.1 276.0Z M525.0 910.3 L521.3 914.0 L518.8 917.8 L516.3 922.7 L511.3 921.5 L508.9 925.2 L501.4 926.5 L493.9 927.7 L486.5 931.4 L480.3 932.7 L482.7 938.9 L479.0 935.2 L471.6 937.7 L464.1 940.1 L459.1 942.6 L456.6 947.6 L457.1 953.8 L460.4 957.6 L461.6 963.8 L460.4 971.2 L460.4 978.7 L457.9 984.9 L452.9 989.9 L447.9 994.8 L443.0 999.8 L438.0 1004.8 L436.3 1008.5 L439.2 1013.5 L440.5 1018.5 L445.5 1021.0 L440.5 1020.5 L436.7 1024.7 L433.0 1030.9 L429.3 1035.9 L423.1 1035.9 L416.9 1038.4 L413.9 1043.3 L415.6 1049.5 L419.3 1054.5 L422.3 1059.5 L420.6 1065.7 L417.4 1070.7 L418.1 1076.9 L421.3 1083.1 L423.1 1090.6 L421.8 1098.0 L416.9 1103.0 L411.9 1105.5 L408.2 1102.5 L411.4 1106.7 L414.4 1110.5 L419.3 1112.9 L426.8 1115.4 L434.3 1121.7 L441.7 1127.9 L449.2 1132.1 M596.4 758.9 L602.1 756.9 L609.5 757.4 M603.3 751.9 L605.8 761.9 M600.8 761.1 L608.3 754.9 M617.0 775.3 L622.5 774.8 M615.8 783.5 L617.0 787.7 M607.3 796.2 L609.8 798.7 M604.6 804.1 L606.3 807.1 M558.6 827.0 L560.1 824.0 L561.6 825.0 L560.3 828.3Z M587.9 824.5 L590.4 827.5 L588.4 830.8 M554.1 844.9 L556.1 849.4 L559.8 848.2 M559.1 844.4 L561.1 850.6 L564.8 851.4 L566.0 846.4 M577.2 843.2 L582.2 841.9 L583.9 846.4 L579.7 848.4 L576.5 846.9Z M518.3 911.6 L525.0 917.0 M525.0 910.3 L518.8 918.5 L516.8 924.5 M377.6 771.1 L377.1 771.9 L376.1 771.9 L375.6 771.1 L376.1 770.2 L377.1 770.2Z M449.2 1132.2 L447.9 1127.3 L451.7 1124.8 L455.4 1122.3 L459.1 1116.1 L461.6 1111.1 L464.6 1109.9 L462.9 1116.1 L461.6 1122.3 L462.9 1127.3 L465.3 1129.8 L471.6 1127.3 L475.3 1124.8 L477.0 1121.1 L475.3 1117.3 L472.8 1113.6 L472.1 1107.4 L471.1 1101.2 L472.8 1096.2 L475.3 1093.7 L471.6 1096.2 L469.1 1101.2 L469.6 1107.4 L470.3 1113.6 L471.6 1119.8 L472.8 1124.8 L471.1 1129.8 L471.6 1136.0 L470.3 1143.4 L466.6 1150.9 L463.6 1157.1 L462.9 1160.8 L460.4 1157.6 L456.6 1162.1 L451.7 1164.6 L446.7 1165.1 L444.2 1168.3 L439.2 1172.5 L433.0 1174.5 L426.8 1180.7 L420.6 1186.9 L415.6 1193.2 L410.6 1199.4 L405.7 1205.6 L400.7 1210.6 L395.7 1215.5 L393.2 1221.7 L392.0 1229.2 L390.8 1236.7 L394.5 1241.6 L399.5 1247.9 L403.2 1252.8 L405.7 1256.6 L401.9 1259.0 L399.5 1264.0 L400.7 1269.0 L404.4 1271.5 L409.4 1276.4 L414.4 1282.7 L416.9 1288.9 L415.6 1295.1 L411.9 1299.3 L405.7 1297.6 L401.9 1301.3 L400.7 1306.3 L403.2 1312.5 L409.4 1318.7 L418.1 1324.9 L429.3 1331.1 L441.7 1338.6 L454.2 1346.1 L462.9 1351.0 L469.1 1358.5 L475.3 1366.0 L480.3 1372.2 L484.0 1379.6 L485.2 1385.8 L489.0 1392.1 L492.7 1399.5 L496.4 1407.0 L502.6 1413.2 L510.1 1420.7 L516.3 1428.1 L520.0 1434.3 L521.3 1438.1 L526.3 1444.3 L530.0 1450.5 L531.2 1457.9 L535.0 1465.4 L537.4 1472.9 L539.9 1477.1 M449.2 1134.7 L452.9 1131.0 L459.1 1129.8 L464.1 1130.3 L461.6 1136.0 L459.1 1142.2 L455.4 1148.4 L450.4 1149.1 L448.4 1143.4Z M415.9 1329.9 L417.4 1329.9 L417.6 1333.6 L416.1 1333.6Z M1357.0 412.4 L1360.0 411.7 L1365.0 410.0 L1370.0 409.0 L1374.9 409.5 L1380.9 410.0 L1386.9 408.0 L1392.9 406.5 L1399.8 407.5 L1407.8 408.5 L1415.7 409.5 L1423.7 410.0 L1429.7 409.0 L1435.7 407.5 L1439.6 407.2 L1438.6 409.0 L1435.7 411.0 L1429.7 412.9 L1423.7 413.9 L1418.7 414.4 L1416.2 416.4 L1413.8 418.9 L1409.8 418.4 L1403.8 417.9 L1397.8 417.4 L1391.9 417.9 L1385.9 418.4 L1381.4 419.4 L1378.4 421.4 L1376.4 423.9 L1376.9 426.1 L1379.9 426.1 L1383.4 425.7 L1386.1 426.1 L1386.1 419.9 L1386.7 426.1 L1388.9 421.4 L1391.9 423.9 L1394.3 427.4 L1395.8 429.9 L1395.3 432.9 L1396.3 435.3 L1397.0 438.3 L1396.3 440.8 L1394.3 442.8 L1391.4 443.8 L1387.9 443.8 L1383.9 443.3 L1379.9 442.3 L1376.4 441.8 L1378.9 444.3 L1381.9 446.3 L1385.9 446.0 L1389.9 445.3 L1393.8 444.3 L1396.8 442.3 L1398.3 439.3 L1398.8 435.8 L1401.3 436.3 L1403.8 439.3 L1405.8 442.8 L1407.8 446.3 L1409.8 449.8 L1411.8 453.3 L1413.8 457.2 L1414.3 461.2 L1413.8 463.2 L1415.3 461.7 L1416.5 457.7 L1416.9 453.8 L1416.2 449.3 L1417.2 445.8 L1419.7 446.8 L1421.2 450.8 L1421.9 455.7 L1421.2 461.7 L1420.2 466.2 L1419.2 467.7 L1421.2 466.7 L1422.2 462.7 L1422.7 458.2 L1423.2 454.3 L1423.7 451.3 L1426.2 452.3 L1428.7 454.3 L1426.7 451.8 L1424.7 449.8 L1423.7 447.3 L1428.7 447.8 L1432.7 450.8 L1436.2 454.8 L1439.1 457.7 L1440.6 460.2 L1440.1 463.7 L1439.1 466.2 L1441.1 464.7 L1442.1 461.2 L1443.6 459.7 L1445.1 463.7 L1445.4 469.2 L1445.8 464.7 L1444.6 459.7 L1442.6 457.2 L1446.6 457.2 L1450.6 458.7 L1453.1 459.7 L1451.6 456.7 L1449.1 454.3 L1448.1 453.3 L1451.6 453.8 L1455.6 455.7 L1459.1 458.2 L1461.5 460.7 L1464.5 463.2 L1467.5 465.7 L1470.5 468.2 L1473.5 470.2 L1477.5 470.9 L1481.5 471.9 L1484.9 473.7 L1488.4 476.2 L1491.4 478.6 L1494.4 481.6 L1496.4 484.6 L1495.4 486.6 L1491.4 488.1 L1487.4 490.1 L1484.4 492.1 L1481.5 494.1 L1479.5 497.1 L1478.5 499.6 L1481.0 497.6 L1484.4 495.1 L1488.4 492.6 L1492.4 490.4 L1495.9 489.1 L1498.9 489.4 L1499.6 490.8 L1496.9 492.1 L1494.4 494.6 L1492.4 498.6 L1491.4 502.0 L1492.9 504.5 L1491.4 507.0 L1488.4 508.5 L1484.4 509.5 L1481.5 511.5 L1478.5 514.5 L1476.0 518.5 L1474.5 522.9 L1473.8 527.4 L1472.0 531.4 L1469.5 534.2 L1467.5 532.6 L1465.5 529.9 L1461.5 528.4 L1457.6 527.4 L1453.6 525.9 L1450.1 524.4 L1448.6 522.9 L1450.6 521.5 L1454.6 522.0 L1459.6 523.4 L1465.5 523.9 L1471.5 524.2 L1477.5 523.4 L1483.4 522.4 L1489.4 521.7 L1495.4 521.0 L1501.4 520.5 L1505.8 520.0 L1509.3 525.4 L1513.8 526.9 L1516.8 522.0 L1521.3 521.0 L1527.2 521.5 L1533.2 523.4 L1538.2 525.9 L1541.2 529.4 L1544.7 533.9 L1548.2 536.4 L1552.1 537.9 L1556.1 539.9 L1560.0 541.9 M1481.0 507.0 L1483.4 502.5 L1486.9 498.1 L1490.4 494.1 L1493.4 492.1 L1492.9 494.6 L1489.9 498.1 L1487.4 502.5 L1484.4 506.5 L1482.0 508.5Z M1474.5 522.9 L1477.5 517.5 L1481.5 514.5 L1486.4 511.5 L1492.4 509.0 L1499.4 507.3 L1501.4 513.5 L1502.9 517.5 L1505.8 519.5 M1494.4 519.5 L1496.9 514.5 L1499.4 508.0 M1494.4 519.5 L1499.4 519.0 L1505.3 518.7 M1455.6 525.6 L1461.5 524.9 L1468.5 525.2 L1474.5 525.6 L1479.5 524.9 L1483.9 523.4 L1484.4 526.4 L1482.9 529.4 L1481.0 533.4 L1480.0 529.4 L1477.5 526.9 L1472.5 528.4 L1469.5 533.9 M1448.1 409.0 L1451.6 407.5 L1456.6 406.5 L1461.5 406.0 L1463.5 404.5 L1468.5 404.0 L1474.5 403.5 L1481.5 402.5 L1487.4 402.0 L1489.9 402.5 L1488.9 405.5 L1486.4 409.0 L1483.9 412.9 L1483.4 416.9 L1483.9 420.9 L1482.9 424.9 L1484.9 427.4 L1486.4 429.9 L1484.9 432.9 L1485.4 436.8 L1484.4 439.8 L1481.5 441.8 L1477.5 443.0 L1471.5 443.3 L1465.5 443.8 L1459.6 443.8 L1453.6 444.3 L1448.6 443.8 L1444.6 444.3 L1439.6 445.3 L1436.2 445.8 L1434.7 444.8 L1436.7 443.3 L1439.6 441.8 L1442.6 440.3 L1445.6 438.8 L1447.6 436.8 L1449.6 434.8 L1453.6 434.3 L1457.1 433.3 L1458.6 430.9 L1459.6 426.9 L1459.4 422.9 L1460.0 418.9 L1459.1 414.9 L1457.1 412.4 L1453.6 411.0 L1450.1 410.0Z M39.3 0.0 L39.6 4.5 L38.5 9.7 L37.4 14.2 L35.9 18.3 L34.0 21.3 L31.8 22.8 L32.9 23.2 L35.5 22.1 L37.8 18.7 L39.3 14.6 L40.8 9.7 L41.7 4.5 L41.9 0.0Z M33.7 13.8 L35.9 12.0 M23.2 35.0 L25.8 32.9 L28.8 31.8 L28.4 33.3 L25.8 34.6 L23.8 35.8Z M28.3 37.2 L29.2 37.0 L30.5 41.0 L29.8 41.5Z M20.0 43.0 L22.4 43.4 L23.3 44.3 L21.7 44.7 L20.0 44.3Z M26.2 43.8 L27.3 43.5 L29.0 46.0 L28.3 46.7Z M35.5 56.1 L36.3 52.4 L38.1 48.2 L40.8 45.6 L42.3 42.5 L44.1 43.8 L43.4 46.0 L41.1 47.9 L42.0 50.9 L43.5 54.0 L42.8 56.2 L41.5 55.7 L41.0 52.4 L40.0 49.4 L38.3 51.6 L37.0 56.2Z M19.6 67.3 L20.9 69.2 L21.7 72.9 L20.2 73.7Z M19.5 277.9 L27.3 277.1 L32.7 277.6 L36.8 277.7 L38.0 277.3 L37.1 275.8 L38.6 274.3 L41.0 273.1 L43.1 272.2 L44.0 270.4 L42.5 268.6 L41.0 266.8 L39.5 265.7 L39.8 263.9 L41.0 262.7 L42.2 264.2 L44.6 265.7 L47.0 266.8 L49.4 266.3 L50.6 264.5 L51.2 262.1 L52.4 261.0 L53.9 262.4 L54.2 264.5 L55.9 265.7 L58.9 266.3 L60.7 264.8 L62.8 263.9 L65.2 264.2 L66.4 265.7 L64.9 267.1 L62.5 267.7 L61.0 268.6 L59.5 270.4 L60.7 272.2 L62.2 274.6 L63.1 277.0 L63.7 279.4 L66.1 280.6 L69.1 280.9 L70.6 281.8 L68.8 283.0 L69.7 284.5 L72.1 284.7 L70.9 286.5 L69.1 287.7 L67.3 289.2 L71.2 290.4 L69.1 291.3 L65.5 291.0 L62.5 289.5 L60.7 287.1 L58.3 284.5 L56.5 282.7 L55.0 281.5 L54.5 283.0 L53.0 284.7 L50.6 286.8 L49.1 289.2 L49.4 291.6 L51.2 293.4 L54.2 295.2 L57.7 297.3 L60.7 299.1 L63.1 301.5 L65.5 304.4 L68.5 306.8 L72.1 309.8 L75.6 312.5 L78.6 315.2 L81.6 317.6 L85.2 320.0 L89.4 322.6 L93.5 325.0 L97.1 327.4 L99.5 329.5 L100.4 331.9 L101.0 334.0 M52.5 271.1 L52.1 272.0 L51.3 272.3 L50.4 272.0 L50.1 271.1 L50.4 270.3 L51.3 270.0 L52.1 270.3Z M45.2 274.1 L46.5 274.5 L48.5 276.5 L47.7 277.5 L46.1 276.1Z M52.8 267.6 L52.4 268.2 L51.7 268.2 L51.3 267.6 L51.7 266.9 L52.4 266.9Z"/>
<path stroke="#1c9a9a" d="M917.7 38.5 L920.7 37.3 L922.7 39.8 L919.7 41.8Z M1379.7 44.8 L1379.0 45.8 L1377.8 45.8 L1377.2 44.8 L1377.8 43.7 L1379.0 43.7Z M1384.9 51.0 L1387.9 49.2 L1392.3 52.2 L1395.3 56.7 L1394.1 59.7 L1389.9 57.2 L1385.9 54.2Z M1402.0 63.4 L1401.3 65.2 L1399.6 65.9 L1397.8 65.2 L1397.1 63.4 L1397.8 61.6 L1399.6 60.9 L1401.3 61.6Z M1437.1 65.9 L1440.1 62.2 L1445.1 62.2 L1447.5 65.9 L1445.1 70.1 L1440.1 69.6Z M1422.9 85.8 L1422.3 87.4 L1420.7 88.0 L1419.1 87.4 L1418.4 85.8 L1419.1 84.2 L1420.7 83.5 L1422.3 84.2Z M1455.0 109.4 L1456.2 103.2 L1460.0 98.2 L1463.7 99.5 L1463.0 104.4 L1467.4 106.9 L1472.4 109.4 L1476.1 111.9 L1469.9 113.1 L1462.5 113.1 L1457.5 114.4Z M1479.9 108.7 L1484.3 106.4 L1484.8 107.7 L1480.6 109.9Z"/>
<path stroke="#42c6c2" stroke-width="0.9" d="M603.9 520.0 L607.6 523.8 L611.3 528.7 L616.3 533.7 L621.3 537.5 L625.0 541.2 L627.5 547.4 L628.2 553.6 L630.0 558.1 L635.0 559.1 L637.4 554.9 L637.4 547.4 L636.2 539.9 L633.7 533.7 L630.0 528.7 L626.8 525.0 L628.7 521.3 L635.0 520.0 L642.4 516.3 L648.6 513.8 L654.8 508.9 L661.1 503.9 L667.3 496.4 L669.8 490.2 L674.7 484.0 L681.0 480.3 L688.4 477.8 L694.6 476.5 L698.4 472.8 L699.6 467.8 L697.1 464.1 L695.9 459.1 L697.1 452.9 L699.6 445.5 L699.6 439.2 L700.1 429.8 M700.0 429.4 L702.0 421.4 L706.0 415.4 L711.9 409.5 L719.9 403.5 L727.9 397.5 L732.9 393.5 L736.8 391.5 M739.8 387.6 L749.8 391.5 L759.7 393.5 L767.7 393.5 L770.7 391.5 L772.1 385.6 L773.7 379.6 L776.7 375.6 L781.6 374.2 L787.6 375.6 L793.6 377.6 L803.5 378.6 L813.5 378.6 L823.4 377.6 L831.4 373.6 L839.4 367.7 L847.3 361.7 L855.3 355.7 L863.3 351.7 L871.2 348.7 L878.2 344.8 L882.2 339.8 L884.2 332.8 L884.2 326.8 L889.1 325.8 L896.1 323.8 L901.1 320.9 L906.1 316.9 L910.1 314.5 L917.0 314.9 L925.0 316.9 L932.0 319.9 L936.9 324.8 L939.9 330.8 L941.9 335.8 L938.9 340.8 L933.9 344.8 L930.0 348.7 M615.0 769.8 L614.2 772.3 L612.1 773.9 L609.5 773.9 L607.4 772.3 L606.6 769.8 L607.4 767.4 L609.5 765.8 L612.1 765.8 L614.2 767.4 L615.0 769.8 M26.9 0.0 L28.0 4.5 L28.0 9.0 L26.6 14.2 L24.3 18.7 L22.1 23.2 L20.9 27.7 L19.9 32.9"/>
<path stroke="#1f9592" stroke-width="0.7" stroke-dasharray="1.8 2.4" d="M576.5 597.1 L581.5 603.3 L586.5 608.3 L590.2 614.5 L595.2 620.7 L598.9 624.5 L602.6 627.0 L604.4 631.9 L602.6 638.1 L598.9 645.6 L597.7 651.8 L600.1 656.8 L603.9 663.0 L607.6 669.2 L611.3 676.7 L607.6 682.9 L598.9 686.6 L593.9 689.1 L598.9 690.4 L603.4 692.8 L604.4 700.3 L605.1 710.2 L605.1 717.7 L606.4 725.2 L610.1 731.4 L607.6 737.6 L606.4 745.1 L605.9 752.5 L605.1 757.5 M607.1 740.0 L606.3 749.9 L604.6 757.4 L608.3 764.9 L612.0 771.1 L617.0 774.8 L622.0 774.8 L619.5 779.8 L617.0 786.0 L614.5 791.0 L610.8 795.9 L607.1 800.9 L602.1 805.9 L597.1 810.9 L593.4 815.8 L589.7 820.8 L585.9 825.8 L584.7 832.0 L581.0 837.0 L576.0 839.5 L569.8 840.7 L563.6 841.9 L557.3 843.2 L551.1 845.7 L546.1 850.6 L541.2 856.9 L536.2 863.1 L533.7 869.3 L534.2 875.5 L538.7 879.2 L540.7 884.2 L537.4 888.7 L530.0 887.9 L523.8 889.2 L518.8 892.9 L515.1 897.9 L518.8 900.4 L523.8 901.6 L525.0 904.6 L525.0 910.3"/>

</g>
<g id="logo">
<path fill="url(#lg)" d="M1668.1 1361.6 L1688.8 1343.5 L1727.6 1309.8 L1766.4 1277.5 L1791.6 1256.6 L1796.2 1255.3 L1800.7 1256.6 L1831.1 1289.8 L1857.0 1317.6 L1884.1 1346.3 L1885.2 1349.9 L1883.5 1352.8 L1879.6 1353.6 L1853.7 1324.7 L1836.3 1309.8 L1819.4 1293.0 L1798.8 1268.7 L1796.2 1267.4 L1790.3 1268.5 L1779.3 1279.5 L1753.5 1305.3 L1727.6 1329.0 L1701.7 1353.2 L1681.0 1372.6 L1676.5 1370.9Z M1774.3 1312.6 L1784.8 1310.5 L1795.2 1310.5 L1805.7 1311.5 L1816.1 1313.6 L1826.6 1316.4 L1837.1 1319.9 L1844.0 1322.3 L1851.7 1324.1 L1884.0 1347.0 L1880.0 1353.5 L1857.0 1342.2 L1847.5 1336.3 L1840.6 1333.5 L1835.0 1332.1 L1830.1 1332.8 L1825.2 1330.7 L1822.4 1329.3 L1826.6 1339.1 L1830.1 1345.3 L1832.9 1353.0 L1833.6 1359.3 L1832.9 1365.6 L1831.5 1367.7 L1826.6 1365.6 L1824.5 1369.8 L1822.8 1376.0 L1818.9 1383.0 L1816.1 1385.8 L1814.1 1388.9 L1808.5 1392.1 L1802.9 1395.9 L1795.9 1399.4 L1790.3 1401.8 L1788.9 1403.9 L1781.3 1404.6 L1770.8 1404.6 L1760.3 1401.1 L1751.3 1397.0 L1744.3 1390.7 L1738.0 1383.7 L1733.8 1376.7 L1730.3 1369.8 L1727.6 1362.8 L1725.5 1355.8 L1726.2 1348.8 L1728.3 1344.6 L1730.0 1348.8 L1731.4 1355.8 L1733.8 1362.8 L1737.3 1369.8 L1744.3 1378.8 L1742.2 1369.8 L1740.8 1362.8 L1739.4 1355.8 L1738.7 1348.8 L1739.4 1341.9 L1740.1 1333.5 L1746.4 1327.2 L1754.1 1320.9 L1763.8 1316.0Z M1814.9 1392.0 L1810.4 1398.8 L1803.3 1404.9 L1793.6 1409.4 L1785.2 1411.0 L1784.3 1408.2 L1791.0 1405.3 L1798.8 1401.7 L1806.5 1396.8Z"/>
<path fill="#000" d="M1821.0 1328.5 L1819.6 1327.9 L1812.7 1325.5 L1805.7 1323.0 L1798.7 1321.8 L1788.2 1321.5 L1781.3 1322.5 L1774.3 1325.5 L1768.7 1330.0 L1763.8 1334.9 L1762.2 1335.0 L1758.2 1341.8 L1754.2 1345.0 L1753.0 1351.0 L1752.2 1357.0 L1753.0 1363.0 L1754.6 1370.1 L1755.8 1374.5 L1758.2 1376.1 L1761.8 1375.7 L1765.8 1378.5 L1769.8 1382.1 L1773.8 1384.9 L1776.9 1386.9 L1782.9 1386.5 L1788.9 1386.5 L1793.7 1384.5 L1798.1 1380.9 L1802.1 1375.7 L1804.9 1368.9 L1805.1 1362.2 L1803.3 1355.8 L1798.9 1351.4 L1792.9 1350.0 L1788.1 1350.6 L1784.1 1353.0 L1781.9 1357.4 L1781.5 1362.2 L1782.9 1364.8 L1786.5 1364.2 L1787.3 1361.0 L1788.9 1359.4 L1792.9 1360.6 L1794.9 1363.0 L1796.9 1366.2 L1797.3 1369.7 L1794.9 1372.9 L1788.9 1374.5 L1782.9 1374.1 L1776.9 1372.5 L1773.0 1370.1 L1775.4 1374.9 L1778.9 1378.9 L1775.4 1378.5 L1771.0 1377.3 L1767.4 1374.9 L1764.2 1371.7 L1761.0 1368.9 L1760.2 1364.6 L1758.2 1366.9 L1757.0 1363.0 L1757.8 1357.0 L1757.4 1351.0 L1759.4 1347.0 L1761.8 1341.8 L1765.0 1337.4 L1767.4 1335.0 L1770.8 1332.4 L1775.7 1327.9 L1781.6 1324.9 L1788.2 1323.9 L1798.7 1324.1 L1805.7 1325.3 L1812.7 1327.6 L1819.6 1329.6Z M1821.7 1357.9 L1824.2 1350.2 L1826.6 1355.1 L1826.3 1360.0 L1823.8 1362.8Z"/>
<text class="l" x="1686.0" y="1464.9" font-size="57.6" fill="#1db886" stroke="#1db886" stroke-width="0.6" textLength="185.6" lengthAdjust="spacingAndGlyphs">IDEAM</text>
</g>

<g stroke="#e9965c" stroke-width="1.2" stroke-dasharray="5.3 2" fill="none">
<line x1="194.5" y1="0" x2="194.5" y2="1476"/>
<line x1="463.5" y1="0" x2="463.5" y2="1476"/>
<line x1="732.5" y1="0" x2="732.5" y2="1476"/>
<line x1="1001.5" y1="0" x2="1001.5" y2="1476"/>
<line x1="1270.5" y1="0" x2="1270.5" y2="1476"/>
<line x1="1538.5" y1="0" x2="1538.5" y2="1476"/>
<line x1="1807.5" y1="0" x2="1807.5" y2="1476"/>
<line x1="20" y1="179.5" x2="1991" y2="179.5"/>
<line x1="20" y1="448.5" x2="1991" y2="448.5"/>
<line x1="20" y1="717.5" x2="1991" y2="717.5"/>
<line x1="20" y1="986.5" x2="1991" y2="986.5"/>
<line x1="20" y1="1255.5" x2="1991" y2="1255.5"/>
</g>
<text class="t" x="557.2" y="89.8" font-size="33.37" fill="#fff">ABI - GOES 19 - CANAL 06 - 2026-04-30 02:20 HLC</text>
<rect x="20" y="1478" width="1971" height="56.5" fill="url(#cb)" stroke="#000" stroke-width="4"/>
<text class="t" x="1005.9" y="1517" font-size="27.65" font-weight="700" fill="#000" text-anchor="middle">Reflectancia</text>
<g stroke="#000" fill="none">
<line x1="20.60" y1="1536" x2="20.60" y2="1553.8" stroke-width="4.3"/>
<line x1="119.15" y1="1536" x2="119.15" y2="1546" stroke-width="3"/>
<line x1="217.70" y1="1536" x2="217.70" y2="1546" stroke-width="3"/>
<line x1="316.25" y1="1536" x2="316.25" y2="1546" stroke-width="3"/>
<line x1="414.80" y1="1536" x2="414.80" y2="1553.8" stroke-width="4.3"/>
<line x1="513.35" y1="1536" x2="513.35" y2="1546" stroke-width="3"/>
<line x1="611.90" y1="1536" x2="611.90" y2="1546" stroke-width="3"/>
<line x1="710.45" y1="1536" x2="710.45" y2="1546" stroke-width="3"/>
<line x1="809.00" y1="1536" x2="809.00" y2="1553.8" stroke-width="4.3"/>
<line x1="907.55" y1="1536" x2="907.55" y2="1546" stroke-width="3"/>
<line x1="1006.10" y1="1536" x2="1006.10" y2="1546" stroke-width="3"/>
<line x1="1104.65" y1="1536" x2="1104.65" y2="1546" stroke-width="3"/>
<line x1="1203.20" y1="1536" x2="1203.20" y2="1553.8" stroke-width="4.3"/>
<line x1="1301.75" y1="1536" x2="1301.75" y2="1546" stroke-width="3"/>
<line x1="1400.30" y1="1536" x2="1400.30" y2="1546" stroke-width="3"/>
<line x1="1498.85" y1="1536" x2="1498.85" y2="1546" stroke-width="3"/>
<line x1="1597.40" y1="1536" x2="1597.40" y2="1553.8" stroke-width="4.3"/>
<line x1="1695.95" y1="1536" x2="1695.95" y2="1546" stroke-width="3"/>
<line x1="1794.50" y1="1536" x2="1794.50" y2="1546" stroke-width="3"/>
<line x1="1893.05" y1="1536" x2="1893.05" y2="1546" stroke-width="3"/>
<line x1="1991.60" y1="1536" x2="1991.60" y2="1553.8" stroke-width="4.3"/>
</g>
<g class="t" font-size="21.2" fill="#000" text-anchor="middle">
<text transform="translate(20.3,1573.1) scale(1,1.075)">0.0</text>
<text transform="translate(414.5,1573.1) scale(1,1.075)">0.2</text>
<text transform="translate(808.7,1573.1) scale(1,1.075)">0.4</text>
<text transform="translate(1202.9,1573.1) scale(1,1.075)">0.6</text>
<text transform="translate(1597.1,1573.1) scale(1,1.075)">0.8</text>
<text transform="translate(1991.3,1573.1) scale(1,1.075)">1.0</text>
</g>
</svg></body></html>
